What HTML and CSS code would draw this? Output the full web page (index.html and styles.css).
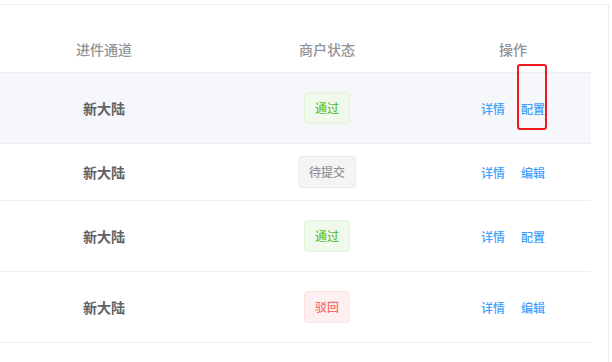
FILE: index.html
```html
<!DOCTYPE html>
<html lang="zh-CN">
<head>
<meta charset="UTF-8">
<title>商户列表</title>
<link rel="stylesheet" href="styles.css">
</head>
<body>

<div id="card">

<div class="grid head">
<div class="cell">进件通道</div>
<div class="cell">商户状态</div>
<div class="cell ops">操作</div>
</div><!-- head -->

<div class="grid row hover">
<div class="cell channel">新大陆</div>
<div class="cell"><span class="tag success">通过</span></div>
<div class="cell ops"><a class="link">详情</a><a class="link marked">配置</a></div>
</div>

<div class="grid row short">
<div class="cell channel">新大陆</div>
<div class="cell"><span class="tag info">待提交</span></div>
<div class="cell ops"><a class="link">详情</a><a class="link">编辑</a></div>
</div>

<div class="grid row">
<div class="cell channel">新大陆</div>
<div class="cell"><span class="tag success">通过</span></div>
<div class="cell ops"><a class="link">详情</a><a class="link">配置</a></div>
</div>

<div class="grid row">
<div class="cell channel">新大陆</div>
<div class="cell"><span class="tag danger">驳回</span></div>
<div class="cell ops"><a class="link">详情</a><a class="link">编辑</a></div>
</div>

</div><!-- card -->

</body>
</html>
```

FILE: styles.css
```css
body {
margin: 0;
padding: 4px 0 0 0;
background: #fff;
font-family: "Noto Sans CJK SC", "Noto Sans", sans-serif;
}
#card {
width: 591px;
height: 337px;
padding: 20px 17px 0 0;
border-top: 1px solid #ebeef5;
border-right: 1px solid #ebeef5;
}
.grid {
display: grid;
grid-template-columns: 208px 238px 145px;
align-items: center;
border-bottom: 1px solid #ebeef5;
}
.head {
height: 47px;
font-size: 14px;
font-weight: 500;
color: #909399;
}
.row {
height: 70px;
}
.row.short {
height: 56px;
}
.hover {
background: #f5f7fa;
}
.cell {
display: flex;
justify-content: center;
align-items: center;
}
.ops {
padding-right: 11px;
gap: 16px;
}
.channel {
font-size: 14px;
font-weight: bold;
color: #606266;
}
.tag {
display: inline-block;
height: 30px;
line-height: 30px;
padding: 0 10px;
font-size: 12px;
font-weight: 500;
border: 1px solid;
border-radius: 4px;
}
.success {
background: #f0f9eb;
border-color: #e1f3d8;
color: #67c23a;
}
.info {
background: #f4f4f5;
border-color: #e9e9eb;
color: #909399;
}
.danger {
background: #fef0f0;
border-color: #fde2e2;
color: #f56c6c;
}
.link {
font-size: 12px;
font-weight: 500;
color: #409eff;
cursor: pointer;
}
.marked {
position: relative;
}
.marked::after {
content: "";
position: absolute;
left: -4px;
right: -2px;
top: -36px;
bottom: -13px;
border: 2.5px solid #f5161b;
border-radius: 3px;
}
```
